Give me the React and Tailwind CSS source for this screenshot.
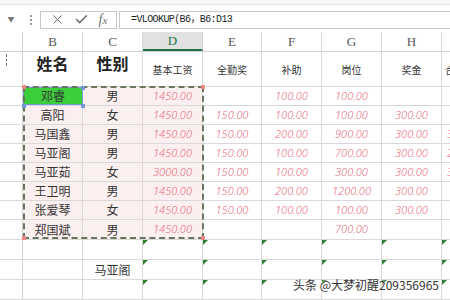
import { X, Check } from 'lucide-react'

const cols = [
  { key: 'B', w: 'w-[60px]' },
  { key: 'C', w: 'w-[60px]' },
  { key: 'D', w: 'w-[60px]' },
  { key: 'E', w: 'w-[59px]' },
  { key: 'F', w: 'w-[60px]' },
  { key: 'G', w: 'w-[60px]' },
  { key: 'H', w: 'w-[60px]' },
  { key: 'I', w: 'w-[60px]' },
]

const titles = ['姓名', '性别', '基本工资', '全勤奖', '补助', '岗位', '奖金', '合计']

const rows = [
  ['邓睿', '男', '1450.00', '', '100.00', '100.00', '', ''],
  ['高阳', '女', '1450.00', '150.00', '100.00', '100.00', '300.00', ''],
  ['马国鑫', '男', '1450.00', '150.00', '200.00', '900.00', '300.00', '3000.00'],
  ['马亚阁', '男', '1450.00', '150.00', '100.00', '700.00', '300.00', '2700.00'],
  ['马亚茹', '女', '3000.00', '150.00', '100.00', '300.00', '300.00', '3850.00'],
  ['王卫明', '男', '1450.00', '150.00', '200.00', '1200.00', '300.00', ''],
  ['张爱琴', '女', '1450.00', '150.00', '100.00', '100.00', '300.00', ''],
  ['郑国斌', '男', '1450.00', '', '', '700.00', '', ''],
]

const cjk = "font-['Microsoft_YaHei','Noto_Sans_CJK_SC',sans-serif]"
const num = "font-['Noto_Sans','Noto_Sans_CJK_SC',sans-serif]"

const Triangle = () => (
  <span className="absolute left-0 top-0 w-0 h-0 border-t-[5px] border-r-[5px] border-t-[#2f7d32] border-r-transparent" />
)

const Corner = ({ className }) => (
  <span className={`absolute w-[4px] h-[4px] bg-[#f08a8a] ${className}`} />
)

const cellBg = (ri, ci) => {
  if (ri === 0 && ci === 0) return 'bg-[#3ccf3c] border border-[#7398d8]'
  if (ci < 3) return 'bg-[#fcefef] border-r border-[#d9d9d9]'
  return 'border-r border-[#d9d9d9]'
}

export default function App() {
  return (
    <div className={`w-[450px] h-[300px] overflow-hidden bg-white relative ${cjk}`}>
      {/* top strip */}
      <div className="h-[5px] border-b border-[#e3e3e3] bg-[#f7f7f7]" />

      {/* formula bar */}
      <div className="flex items-center h-[27px] pt-[5px] pb-[3px]">
        <div className="w-[22px] shrink-0 h-[18px] flex items-center justify-center text-[#777] text-[7px]">▼</div>
        <div className="w-[18px] shrink-0 h-[18px] flex flex-col items-center justify-center gap-[2px]">
          <span className="w-[2px] h-[2px] bg-[#999]" />
          <span className="w-[2px] h-[2px] bg-[#999]" />
          <span className="w-[2px] h-[2px] bg-[#999]" />
        </div>
        <div className="w-[77px] shrink-0 h-[18px] border border-[#c8c8c8] flex items-center justify-around px-[4px] text-[#6d6d6d]">
          <X size={15} strokeWidth={1.6} />
          <Check size={15} strokeWidth={2.4} />
          <span className="font-['Liberation_Serif',serif] italic text-[14px] leading-none">f<span className="text-[11px]">x</span></span>
        </div>
        <div className="flex-1 h-[18px] ml-[2px] border border-[#c8c8c8] border-r-0 flex items-center pl-[11px] text-[10px] text-[#222] font-['Liberation_Mono','Noto_Sans_CJK_SC',monospace] tracking-[-0.6px]">
          =VLOOKUP(B6，B6:D13
        </div>
      </div>

      {/* column headers */}
      <div className="flex h-[20px] border-b border-[#d0d0d0] bg-white">
        <div className="w-[23px] shrink-0 border-r border-[#d0d0d0]" />
        {cols.map(c => (
          <div
            key={c.key}
            className={`${c.w} shrink-0 border-r border-[#d8d8d8] flex items-center justify-center font-['Liberation_Serif',serif] text-[13px] ${c.key === 'D' ? 'bg-[#e1e1e1] text-[#217346] border-b-2 border-b-[#217346]' : 'text-[#555]'}`}
          >
            {c.key === 'I' ? '' : c.key}
          </div>
        ))}
      </div>

      {/* title row */}
      <div className="flex h-[35px] border-b border-[#d9d9d9]">
        <div className="w-[23px] shrink-0 border-r border-[#d0d0d0] flex justify-start pl-[6px] pt-[2px]">
          <span className="w-0 h-[12px] border-l border-dashed border-[#777]" />
        </div>
        {cols.map((c, i) => (
          <div
            key={c.key}
            className={`${c.w} shrink-0 border-r border-[#d9d9d9] flex overflow-hidden whitespace-nowrap ${i === 7 ? 'justify-start pl-[3px]' : 'justify-center'} ${i < 2 ? 'items-start text-[16px] font-bold text-[#222] leading-[20px] pt-[1px]' : 'items-center text-[10px] text-[#333]'}`}
          >
            {titles[i]}
          </div>
        ))}
      </div>

      {/* data rows */}
      {rows.map((r, ri) => (
        <div key={ri} className={`flex ${ri === 7 ? 'h-[20px]' : 'h-[19px]'} border-b border-[#d9d9d9]`}>
          <div className="w-[23px] shrink-0 border-r border-[#d0d0d0]" />
          {cols.map((c, ci) => (
            <div
              key={c.key}
              className={`${c.w} shrink-0 relative flex items-center overflow-hidden whitespace-nowrap ${ci === 7 ? 'justify-start pl-[5px]' : 'justify-center'} ${cellBg(ri, ci)} ${ci < 2 ? 'text-[12px] text-[#333]' : `${num} italic font-light text-[11px] text-[#e8707e]`}`}
            >
              {r[ci]}
            </div>
          ))}
        </div>
      ))}

      {/* bottom rows */}
      {[0, 1, 2].map(ri => (
        <div key={ri} className="flex h-[20px] border-b border-[#d9d9d9]">
          <div className="w-[23px] shrink-0 border-r border-[#d0d0d0]" />
          {cols.map((c, ci) => (
            <div
              key={c.key}
              className={`${c.w} shrink-0 relative border-r border-[#d9d9d9] flex items-center justify-center text-[12px] text-[#333]`}
            >
              {ri === 1 && ci === 1 ? '马亚阁' : ''}
              {ci >= 2 && <Triangle />}
            </div>
          ))}
        </div>
      ))}

      {/* copy range marching ants over B6:D13 */}
      <div className="absolute left-[23px] top-[86px] w-[181px] h-[153px] border-2 border-dashed border-[#66775c] pointer-events-none">
        <Corner className="left-[-3px] top-[-3px]" />
        <Corner className="right-[-3px] top-[-3px]" />
        <Corner className="left-[-3px] bottom-[-3px]" />
        <Corner className="right-[-3px] bottom-[-3px]" />
      </div>
      {/* selected cell handles */}
      <span className="absolute left-[81px] top-[86px] w-[4px] h-[4px] bg-[#7398d8]" />
      <span className="absolute left-[81px] top-[104px] w-[4px] h-[4px] bg-[#7398d8]" />
      <span className="absolute left-[22px] top-[104px] w-[4px] h-[4px] bg-[#7398d8]" />

      {/* watermark */}
      <div className="absolute left-[293px] top-[276px] text-[12px] text-[#333] whitespace-nowrap [text-shadow:0_0_2px_#fff,0_0_2px_#fff]">
        头条 @大梦初醒209356965
      </div>
    </div>
  )
}
